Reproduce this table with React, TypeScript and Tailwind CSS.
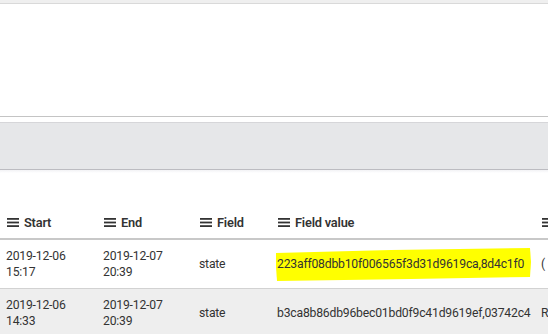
import React from "react";

const Menu = () => (
  <svg width="12" height="9" viewBox="0 0 12 9" className="shrink-0">
    <rect x="0" y="0" width="12" height="1.8" fill="#333" />
    <rect x="0" y="3.6" width="12" height="1.8" fill="#333" />
    <rect x="0" y="7.2" width="12" height="1.8" fill="#333" />
  </svg>
);

const cols = "grid grid-cols-[97px_96px_78px_264px_13px]";

function Head({ label }: { label: string }) {
  return (
    <div className="flex items-center gap-[5px] pl-[7px] whitespace-nowrap overflow-hidden">
      <Menu />
      {label ? <span className="font-semibold">{label}</span> : null}
    </div>
  );
}

function Two({ a, b }: { a: string; b: string }) {
  return (
    <div className="pl-[6px] flex flex-col justify-center leading-[16px]">
      <span>{a}</span>
      <span>{b}</span>
    </div>
  );
}

function One({ t, children }: { t?: string; children?: React.ReactNode }) {
  return (
    <div className="pl-[6px] flex items-center whitespace-nowrap relative">
      {children}
      {t}
    </div>
  );
}

export default function App() {
  return (
    <div
      className="w-[548px] h-[334px] overflow-hidden bg-white text-[#333] text-[12.2px] tracking-[-0.2px]"
      style={{ fontFamily: "Roboto, 'Liberation Sans', sans-serif" }}
    >
      <div className="h-[3px] bg-[#efefef] border-b border-[#d9d9d9] box-content" />
      <div className="h-[112px]" />
      <div className="border-t border-[#c4c4c4]" />
      <div className="h-[5px]" />
      <div className="h-[48px] bg-[#e6e7e9] border-t border-[#d6d6d9] border-b border-b-[#bcbcc1]" />
      <div className="h-[3px] bg-gradient-to-b from-[#f2f2f5] to-white" />
      <div className="h-[31px]" />
      <div className="w-[548px]">
        <div className={`${cols} h-[36px] border-b-2 border-[#c8c8c8] pt-[5px] pb-[2px] text-[12.8px]`}>
          <Head label="Start" />
          <Head label="End" />
          <Head label="Field" />
          <Head label="Field value" />
          <Head label="" />
        </div>
        <div className={`${cols} h-[49px] border-b border-[#d2d2d2]`}>
          <Two a="2019-12-06" b="15:17" />
          <Two a="2019-12-07" b="20:39" />
          <One t="state" />
          <One>
            <svg
              className="absolute left-0 top-0"
              width="264"
              height="48"
              viewBox="0 0 264 48"
            >
              <polygon
                points="5,13 120,10 259,8 260,22 259,37 140,39 6,41 5,27"
                fill="#ffff00"
              />
            </svg>
            <span className="relative">223aff08dbb10f006565f3d31d9619ca,8d4c1f0</span>
          </One>
          <One t="(" />
        </div>
        <div className={`${cols} h-[48px] bg-[#eeeeee]`}>
          <Two a="2019-12-06" b="14:33" />
          <Two a="2019-12-07" b="20:39" />
          <One t="state" />
          <One t="b3ca8b86db96bec01bd0f9c41d9619ef,03742c4" />
          <One t="R" />
        </div>
      </div>
    </div>
  );
}
